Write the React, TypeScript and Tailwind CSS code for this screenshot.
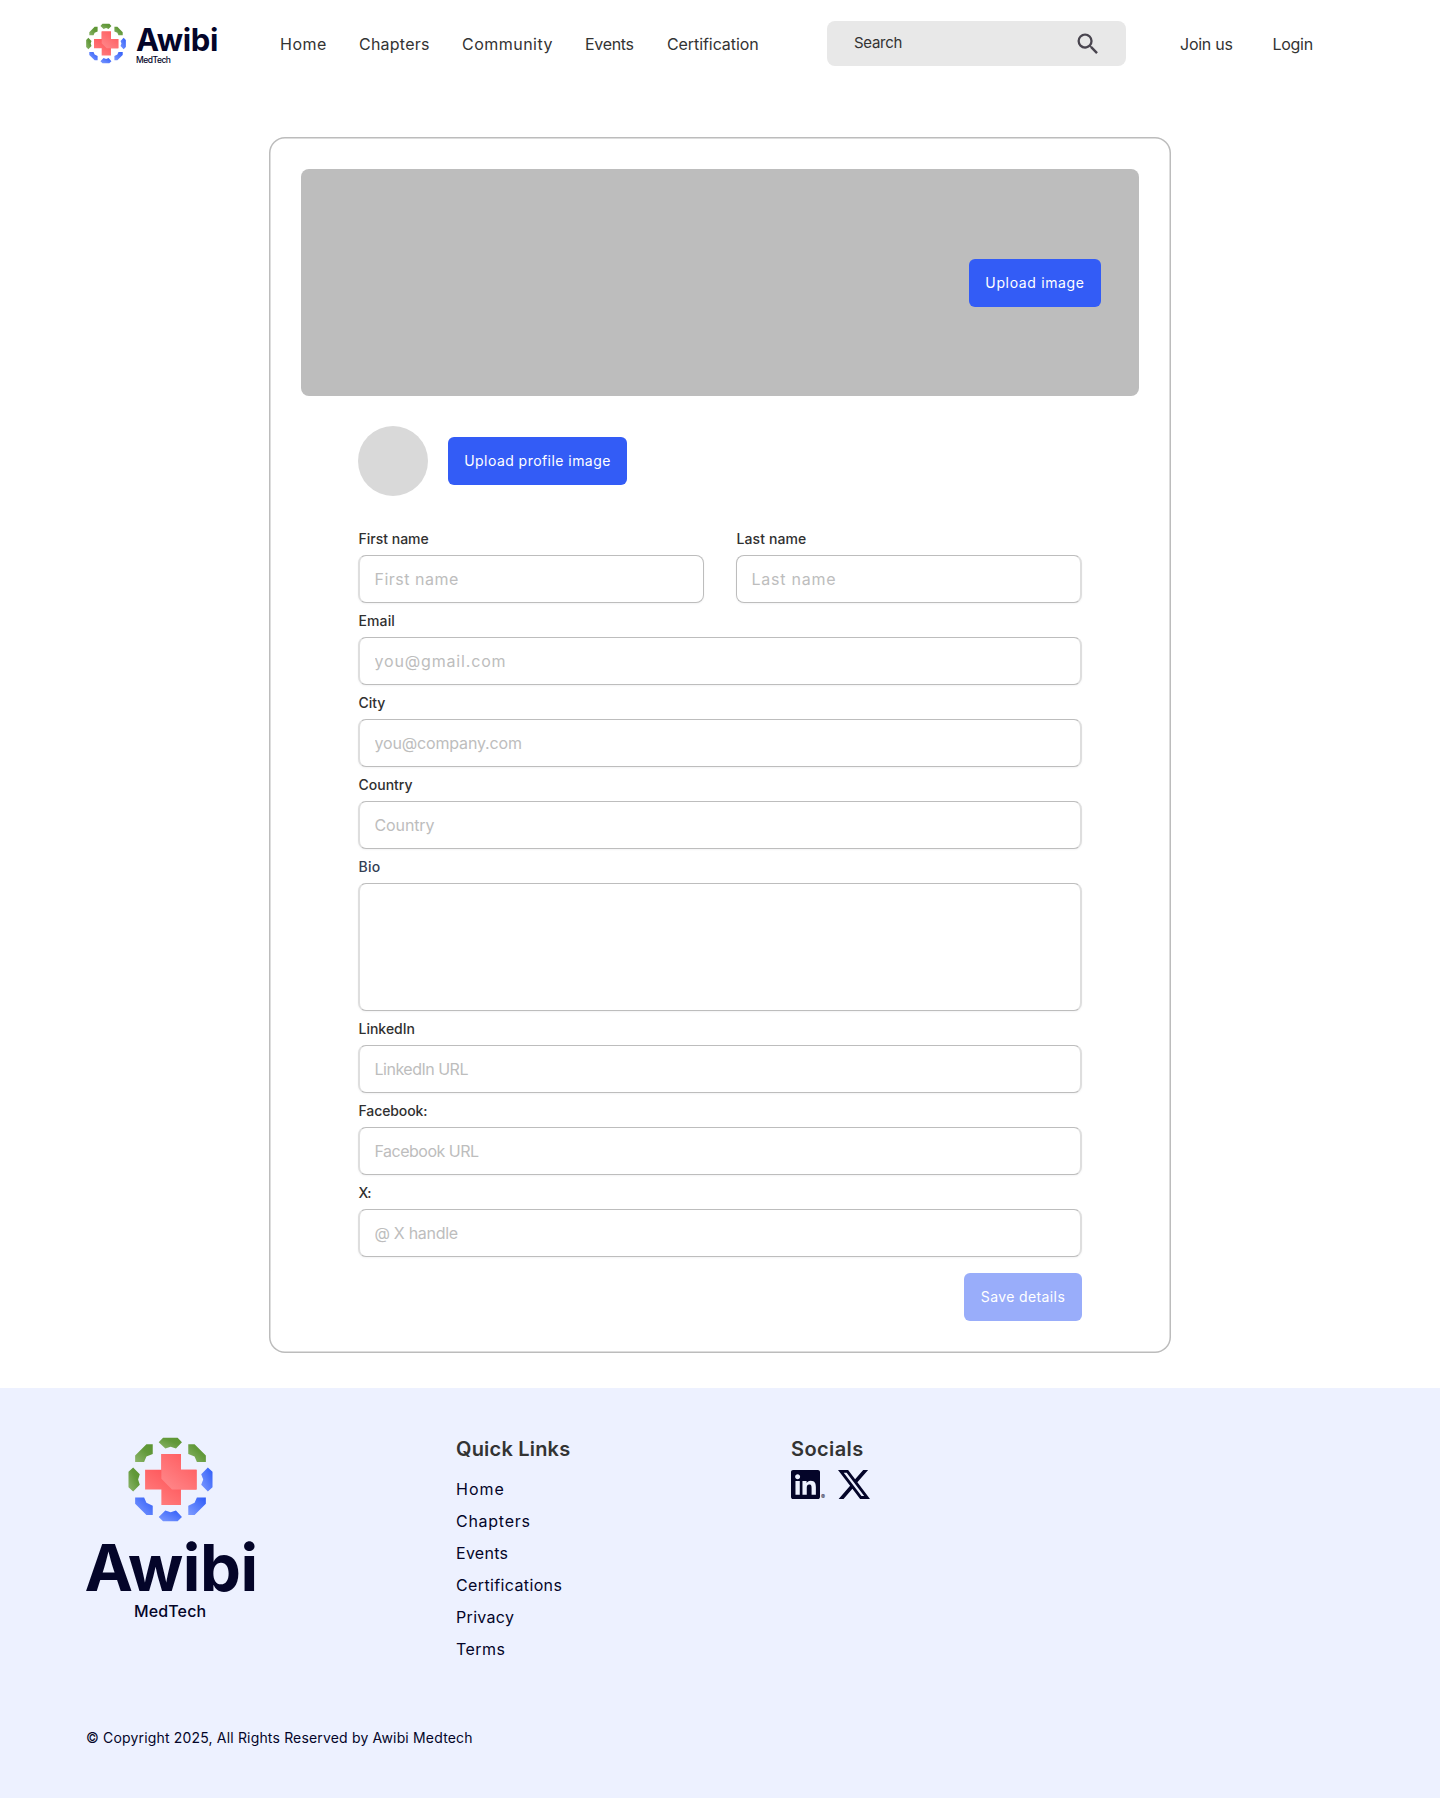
import { useId } from "react";

type Item = { label: string; className: string };

const navItems: Item[] = [
  { label: "Home", className: "w-[79px] tracking-[0.5px]" },
  { label: "Chapters", className: "w-[103px] tracking-[0.23px]" },
  { label: "Community", className: "w-[123px] tracking-[0.48px]" },
  { label: "Events", className: "w-[82px] tracking-[-0.33px]" },
  { label: "Certification", className: "w-[160px] tracking-[-0.08px]" },
];

const quickLinks: Item[] = [
  { label: "Home", className: "tracking-[1px]" },
  { label: "Chapters", className: "tracking-[0.73px]" },
  { label: "Events", className: "tracking-[0.27px]" },
  { label: "Certifications", className: "tracking-[0.37px]" },
  { label: "Privacy", className: "tracking-[0.32px]" },
  { label: "Terms", className: "tracking-[0.45px]" },
];

const greenParts = [
  "266,65 279,51 323,51 336,65 318,84 302,78 286,84",
  "248,71 229,71 195,105 195,124 222,124 229,108 248,100",
  "355,71 374,71 408,105 408,124 381,124 374,108 355,100",
  "189,141 175,154 175,200 189,213 209,193 204,177 209,161",
];

const blueParts = [
  "414,141 428,154 428,200 414,213 394,193 400,177 394,161",
  "195,231 222,231 229,247 248,256 248,284 229,284 195,250",
  "408,231 381,231 374,247 355,256 355,284 374,284 408,250",
  "266,290 279,303 323,303 336,290 318,270 302,276 286,270",
];

function LogoMark({ className }: { className: string }) {
  const id = useId();
  return (
    <svg viewBox="174 49 255 256" className={className} aria-hidden="true">
      <defs>
        <linearGradient id={`${id}g`} x1="0" y1="1" x2="1" y2="0">
          <stop offset="0" stopColor="#8db56c" />
          <stop offset="0.6" stopColor="#62993a" />
          <stop offset="1" stopColor="#5b9431" />
        </linearGradient>
        <linearGradient id={`${id}b`} x1="0" y1="1" x2="1" y2="0">
          <stop offset="0" stopColor="#7f9cff" />
          <stop offset="1" stopColor="#2f5cf8" />
        </linearGradient>
        <linearGradient id={`${id}r`} gradientUnits="userSpaceOnUse" x1="235" y1="240" x2="290" y2="160">
          <stop offset="0" stopColor="#ff8080" />
          <stop offset="1" stopColor="#ff5a5e" />
        </linearGradient>
        <linearGradient id={`${id}s`} gradientUnits="userSpaceOnUse" x1="290" y1="195" x2="355" y2="115">
          <stop offset="0" stopColor="#ff8487" />
          <stop offset="1" stopColor="#ff5f62" />
        </linearGradient>
      </defs>
      {greenParts.map((p) => (
        <polygon key={p} points={p} fill={`url(#${id}g)`} />
      ))}
      {blueParts.map((p) => (
        <polygon key={p} points={p} fill={`url(#${id}b)`} />
      ))}
      <polygon
        points="274,100 333,100 333,148 380,148 380,207 333,207 333,254 274,254 274,207 225,207 225,148 274,148"
        fill={`url(#${id}r)`}
      />
      <polygon points="274,100 333,100 333,148 380,148 380,207 306,207 274,175" fill={`url(#${id}s)`} />
    </svg>
  );
}

function Header() {
  return (
    <header className="flex h-[87px] items-center pl-[86px] text-base text-[#333333]">
      <a className="flex h-[41px] w-[194px]">
        <LogoMark className="h-[41px] w-[40px]" />
        <span className="ml-[10px] flex flex-col pt-[6px] text-[#040529]">
          <span className="text-[31px] leading-[22px] font-bold tracking-[-0.33px]">Awibi</span>
          <span className="mt-[5px] text-[8.5px] leading-[9px] font-medium tracking-[-0.5px]">MedTech</span>
        </span>
      </a>
      <nav className="flex">
        {navItems.map((item) => (
          <a key={item.label} className={item.className}>
            {item.label}
          </a>
        ))}
      </nav>
      <div className="flex h-[45px] w-[299px] items-center justify-between rounded-lg bg-[#e8e8e8] pr-[24px] pl-[27px]">
        <span className="text-[15px] tracking-[-0.3px]">Search</span>
        <svg viewBox="0 0 24 24" className="size-[28px]" fill="#49454f" aria-hidden="true">
          <path d="M15.5 14h-.79l-.28-.27A6.471 6.471 0 0 0 16 9.5 6.5 6.5 0 1 0 9.5 16c1.61 0 3.09-.59 4.23-1.57l.27.28v.79l5 4.99L20.49 19l-4.99-5zm-6 0C7.01 14 5 11.99 5 9.5S7.01 5 9.5 5 14 7.01 14 9.5 11.99 14 9.5 14z" />
        </svg>
      </div>
      <a className="ml-[54px] w-[92.5px] tracking-[-0.25px]">Join us</a>
      <a className="tracking-[-0.3px]">Login</a>
    </header>
  );
}

type FieldProps = {
  label: string;
  labelClass?: string;
  placeholder: string;
  inputClass?: string;
  className?: string;
};

function Field({ label, labelClass = "", placeholder, inputClass = "", className = "" }: FieldProps) {
  return (
    <label className={`flex flex-col gap-1.5 ${className}`}>
      <span className={`pl-[0.5px] text-sm font-[450] text-[#303030] ${labelClass}`}>{label}</span>
      <input
        placeholder={placeholder}
        className={`h-12 w-full rounded-lg border border-[#bdbdbd] bg-white px-[14.5px] text-base shadow-[0_1px_2px_rgba(16,24,40,0.05)] placeholder:text-[#bdbdbd] ${inputClass}`}
      />
    </label>
  );
}

function ProfileCard() {
  return (
    <main className="mx-auto mt-[50px] flex w-[902px] flex-col rounded-2xl p-8 shadow-[inset_0_0_0_1.5px_#bcbcbc]">
      <div className="flex h-[227px] items-center justify-end rounded-lg bg-[#bdbdbd] pr-[38px]">
        <button className="h-12 w-[132px] rounded-md bg-[#335cf6] text-sm tracking-[0.65px] text-white">
          Upload image
        </button>
      </div>
      <form className="mx-[57px] mt-[30px] flex flex-col">
        <div className="flex items-center gap-5">
          <div className="size-[70px] rounded-full bg-[#d9d9d9]" />
          <button
            type="button"
            className="h-12 w-[179px] rounded-md bg-[#335cf6] text-sm tracking-[0.45px] text-white"
          >
            Upload profile image
          </button>
        </div>
        <div className="mt-[33px] flex flex-col gap-2">
          <div className="flex justify-between">
            <Field
              className="w-[346px]"
              label="First name"
              placeholder="First name"
              inputClass="border-l-2 border-l-[#dedede] tracking-[0.5px]"
            />
            <Field
              className="w-[346px]"
              label="Last name"
              labelClass="tracking-[0.1px]"
              placeholder="Last name"
              inputClass="border-r-2 border-r-[#dedede] tracking-[0.75px]"
            />
          </div>
          <Field
            label="Email"
            placeholder="you@gmail.com"
            labelClass="tracking-[0.1px]"
            inputClass="border-x-2 border-x-[#dedede] tracking-[0.83px]"
          />
          <Field
            label="City"
            placeholder="you@company.com"
            inputClass="border-x-2 border-x-[#dedede] tracking-[-0.16px]"
          />
          <Field
            label="Country"
            placeholder="Country"
            inputClass="border-x-2 border-x-[#dedede] tracking-[-0.12px]"
          />
          <label className="flex flex-col gap-1.5">
            <span className="pl-[0.5px] text-sm font-[450] tracking-[0.29px] text-[#344054]">Bio</span>
            <textarea className="block h-32 w-full resize-none rounded-lg border border-x-2 border-[#bdbdbd] border-x-[#dedede] bg-white px-[15px] py-3 shadow-[0_1px_2px_rgba(16,24,40,0.05)]" />
          </label>
          <Field
            label="LinkedIn"
            placeholder="LinkedIn URL"
            inputClass="border-x-2 border-x-[#dedede] tracking-[-0.5px]"
          />
          <Field
            label="Facebook:"
            labelClass="tracking-[-0.1px]"
            placeholder="Facebook URL"
            inputClass="border-x-2 border-x-[#dedede] tracking-[-0.5px]"
          />
          <Field
            label="X:"
            labelClass="tracking-[-1px]"
            placeholder="@ X handle"
            inputClass="border-x-2 border-x-[#dedede] tracking-[-0.3px]"
          />
        </div>
        <button
          type="button"
          className="mt-4 h-12 w-[118px] self-end rounded-md bg-[#99adfa] text-sm tracking-[0.38px] text-white"
        >
          Save details
        </button>
      </form>
    </main>
  );
}

function Footer() {
  return (
    <footer className="mt-[35px] h-[410px] bg-[#edf1ff] pt-[49px] pl-[86px] text-[#040529]">
      <div className="flex">
        <div className="flex w-[370px] flex-col">
          <LogoMark className="ml-[42px] h-[85px] w-[85px]" />
          <span className="mt-[22px] -ml-[1.5px] text-[65px] leading-[48px] font-bold tracking-[-0.5px]">
            Awibi
          </span>
          <span className="mt-[7px] ml-[48px] text-base font-medium tracking-[0.13px]">MedTech</span>
        </div>
        <div className="flex w-[335px] flex-col">
          <h2 className="text-xl leading-6 font-semibold tracking-[0.2px] text-[#333333]">Quick Links</h2>
          <ul className="mt-3 text-base leading-8">
            {quickLinks.map((item) => (
              <li key={item.label} className={item.className}>
                {item.label}
              </li>
            ))}
          </ul>
        </div>
        <div className="flex flex-col">
          <h2 className="text-xl leading-6 font-semibold tracking-[0.4px] text-[#333333]">Socials</h2>
          <div className="mt-[9px] flex items-end">
            <svg viewBox="0 32 448 448" className="size-[29px]" fill="currentColor" aria-hidden="true">
              <path d="M416 32H31.9C14.3 32 0 46.5 0 64.3v383.4C0 465.5 14.3 480 31.9 480H416c17.6 0 32-14.5 32-32.3V64.3c0-17.8-14.4-32.3-32-32.3zM135.4 416H69V202.2h66.5V416zm-33.2-243c-21.3 0-38.5-17.3-38.5-38.5S80.9 96 102.2 96c21.2 0 38.5 17.3 38.5 38.5 0 21.3-17.2 38.5-38.5 38.5zm282.1 243h-66.4V312c0-24.8-.5-56.7-34.5-56.7-34.6 0-39.9 27-39.9 54.9V416h-66.4V202.2h63.7v29.2h.9c8.9-16.8 30.6-34.5 62.9-34.5 67.2 0 79.7 44.3 79.7 101.9V416z" />
            </svg>
            <span className="ml-[1px] w-[17px] text-[6px] leading-[5px]">®</span>
            <svg
              viewBox="1.254 2.25 21.573 19.5"
              className="h-[29px] w-[32px]"
              fill="currentColor"
              aria-hidden="true"
            >
              <path d="M18.244 2.25h3.308l-7.227 8.26 8.502 11.24H16.17l-5.214-6.817L4.99 21.75H1.68l7.73-8.835L1.254 2.25H8.08l4.713 6.231zm-1.161 17.52h1.833L7.084 4.126H5.117z" />
            </svg>
          </div>
        </div>
      </div>
      <p className="mt-[63px] text-sm tracking-[0.17px]">
        © Copyright 2025, All Rights Reserved by Awibi Medtech
      </p>
    </footer>
  );
}

export default function App() {
  return (
    <div className="min-h-[1798px] w-[1440px] overflow-hidden bg-white font-['Inter',sans-serif]">
      <Header />
      <ProfileCard />
      <Footer />
    </div>
  );
}
